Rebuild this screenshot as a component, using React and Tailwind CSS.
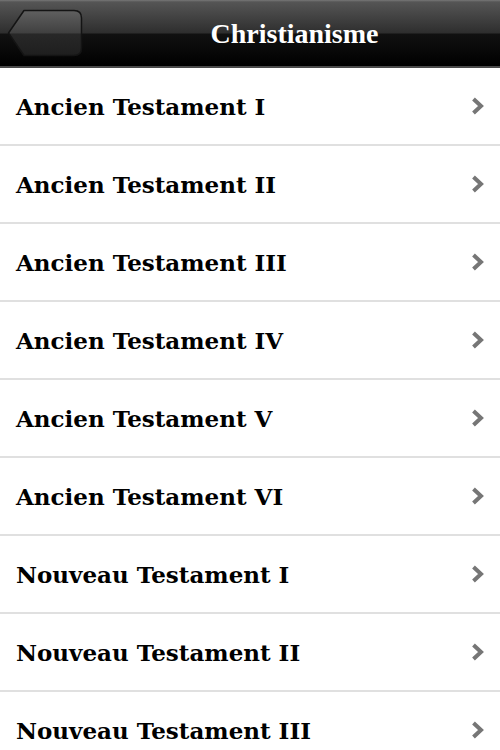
const items = [
  'Ancien Testament I',
  'Ancien Testament II',
  'Ancien Testament III',
  'Ancien Testament IV',
  'Ancien Testament V',
  'Ancien Testament VI',
  'Nouveau Testament I',
  'Nouveau Testament II',
  'Nouveau Testament III',
]

function BackButton() {
  return (
    <svg width="76" height="48" viewBox="0 0 76 48" className="flex-shrink-0">
      <defs>
        <linearGradient id="bb" x1="0" y1="0" x2="0" y2="1">
          <stop offset="0" stopColor="#606060" />
          <stop offset="0.5" stopColor="#404040" />
          <stop offset="0.52" stopColor="#282828" />
          <stop offset="1" stopColor="#1e1e1e" />
        </linearGradient>
      </defs>
      <path
        d="M17 1.5 H67 Q74.5 1.5 74.5 9 V39 Q74.5 46.5 67 46.5 H17 L1.5 24 Z"
        fill="url(#bb)"
        stroke="#141414"
        strokeWidth="1.5"
        strokeLinejoin="round"
      />
    </svg>
  )
}

function Chevron() {
  return (
    <svg width="16" height="20" viewBox="0 0 16 20" className="flex-shrink-0">
      <path
        d="M3.5 3 L11 10 L3.5 17"
        fill="none"
        stroke="#767676"
        strokeWidth="4"
        strokeLinecap="butt"
        strokeLinejoin="miter"
      />
    </svg>
  )
}

export default function App() {
  return (
    <div className="w-[500px] h-[750px] overflow-hidden bg-white">
      <div className="h-[68px] flex items-center pl-[7px] border-b-2 border-[#4a4a4a] bg-[linear-gradient(to_bottom,#777777_0px,#555555_2px,#2e2e2e_33px,#111111_34px,#000000_66px)]">
        <BackButton />
        <div
          className="flex-1 text-center text-white font-bold text-[28px] pl-[6px] pt-[1px]"
          style={{ fontFamily: '"Liberation Serif", serif' }}
        >
          Christianisme
        </div>
      </div>
      <ul>
        {items.map(item => (
          <li
            key={item}
            className="h-[78px] flex items-center justify-between pl-4 pr-[14px] border-b-2 border-[#e0e0e0]"
          >
            <span
              className="font-bold text-[23px] text-black pt-[3px]"
              style={{ fontFamily: '"DejaVu Serif", serif' }}
            >
              {item}
            </span>
            <Chevron />
          </li>
        ))}
      </ul>
    </div>
  )
}
